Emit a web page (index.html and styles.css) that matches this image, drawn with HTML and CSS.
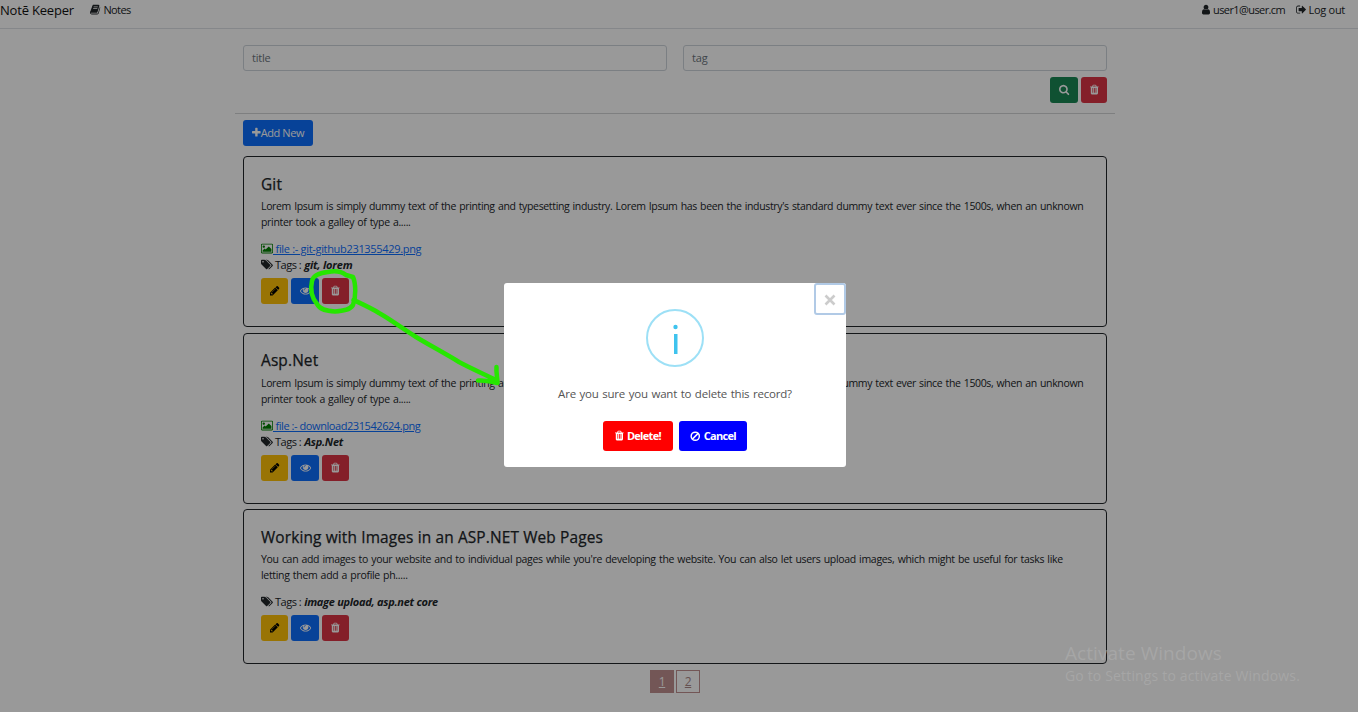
FILE: index.html
```
<!DOCTYPE html>
<html lang="en">
<head>
<meta charset="utf-8">
<title>Notē Keeper</title>
<link rel="stylesheet" href="styles.css">
</head>
<body>
<svg class="sprite" aria-hidden="true">
  <symbol id="trash" viewBox="192 0 1408 1792"><path d="M704 1376v-704q0-14-9-23t-23-9h-64q-14 0-23 9t-9 23v704q0 14 9 23t23 9h64q14 0 23-9t9-23zm256 0v-704q0-14-9-23t-23-9h-64q-14 0-23 9t-9 23v704q0 14 9 23t23 9h64q14 0 23-9t9-23zm256 0v-704q0-14-9-23t-23-9h-64q-14 0-23 9t-9 23v704q0 14 9 23t23 9h64q14 0 23-9t9-23zm-544-992h448l-48-117q-7-9-17-11h-317q-10 2-17 11zm928 32v64q0 14-9 23t-23 9h-96v948q0 83-47 143.5t-113 60.5h-832q-66 0-113-58.5t-47-141.5v-952h-96q-14 0-23-9t-9-23v-64q0-14 9-23t23-9h309l70-167q15-37 54-63t79-26h320q40 0 79 26t54 63l70 167h309q14 0 23 9t9 23z"/></symbol>
  <symbol id="pencil" viewBox="128 0 1536 1792"><path d="M491 1536l91-91-235-235-91 91v107h128v128h107zm523-928q0-22-22-22-10 0-17 7l-542 542q-7 7-7 17 0 22 22 22 10 0 17-7l542-542q7-7 7-17zm-54-192l416 416-832 832h-416v-416zm683 96q0 53-37 90l-166 166-416-416 166-165q36-38 90-38 53 0 91 38l235 234q37 39 37 91z"/></symbol>
  <symbol id="eye" viewBox="0 0 1792 1792"><path d="M1664 960q-152-236-381-353 61 104 61 225 0 185-131.5 316.5t-316.5 131.5-316.5-131.5-131.5-316.5q0-121 61-225-229 117-381 353 133 205 333.5 326.5t434.5 121.5 434.5-121.5 333.5-326.5zm-720-384q0-20-14-34t-34-14q-125 0-214.5 89.5t-89.5 214.5q0 20 14 34t34 14 34-14 14-34q0-86 61-147t147-61q20 0 34-14t14-34zm848 384q0 34-20 69-140 230-376.5 368.5t-499.5 138.5-499.5-139-376.5-368q-20-35-20-69t20-69q140-229 376.5-368t499.5-139 499.5 139 376.5 368q20 35 20 69z"/></symbol>
  <symbol id="search" viewBox="64 0 1664 1792"><path d="M1216 832q0-185-131.5-316.5t-316.5-131.5-316.5 131.5-131.5 316.5 131.5 316.5 316.5 131.5 316.5-131.5 131.5-316.5zm512 832q0 52-38 90t-90 38q-54 0-90-38l-343-342q-179 124-399 124-143 0-273.5-55.5t-225-150-150-225-55.5-273.5 55.5-273.5 150-225 225-150 273.5-55.5 273.5 55.5 225 150 150 225 55.5 273.5q0 220-124 399l343 343q37 37 37 90z"/></symbol>
  <symbol id="plus" viewBox="192 0 1408 1792"><path d="M1600 736v192q0 40-28 68t-68 28h-416v416q0 40-28 68t-68 28h-192q-40 0-68-28t-28-68v-416h-416q-40 0-68-28t-28-68v-192q0-40 28-68t68-28h416v-416q0-40 28-68t68-28h192q40 0 68 28t28 68v416h416q40 0 68 28t28 68z"/></symbol>
  <symbol id="user" viewBox="256 0 1280 1792"><path d="M1536 1399q0 109-62.5 187t-150.5 78h-854q-88 0-150.5-78t-62.5-187q0-85 8.5-160.5t31.5-152 58.5-131 94-89 134.5-34.5q131 128 313 128t313-128q76 0 134.5 34.5t94 89 58.5 131 31.5 152 8.5 160.5zm-256-887q0 159-112.5 271.5t-271.5 112.5-271.5-112.5-112.5-271.5 112.5-271.5 271.5-112.5 271.5 112.5 112.5 271.5z"/></symbol>
  <symbol id="signout" viewBox="64 0 1600 1792"><path d="M704 1440q0 4 1 20t.5 26.5-3 23.5-10 19.5-20.5 6.5h-320q-119 0-203.5-84.5t-84.5-203.5v-704q0-119 84.5-203.5t203.5-84.5h320q13 0 22.500 9.500t9.500 22.500q0 4 1 20t.5 26.500-3 23.500-10 19.500-20.500 6.500h-320q-66 0-113 47t-47 113v704q0 66 47 113t113 47h312l11.500 1 11.500 3 8 5.500 7 9 2 13.500zm928-544q0 26-19 45l-544 544q-19 19-45 19t-45-19-19-45v-288h-448q-26 0-45-19t-19-45v-384q0-26 19-45t45-19h448v-288q0-26 19-45t45-19 45 19l544 544q19 19 19 45z"/></symbol>
  <symbol id="book" viewBox="64 0 1664 1792"><path d="M1703 478q40 57 18 129l-275 906q-19 64-76.500 107.500t-122.500 43.500h-923q-77 0-148.500-53.500t-99.500-131.500q-24-67-2-127 0-4 3-27t4-37q1-8-3-21.500t-3-19.500q2-11 8-21t16.500-23.500 16.500-23.500q23-38 45-91.500t30-91.500q3-10 .5-30t-.5-28q3-11 17-28t17-23q21-36 42-92t25-90q1-9-2.500-32t.5-28q4-13 22-30.500t22-22.500q19-26 42.500-84.500t27.500-96.500q1-8-3-25.500t-2-26.500q2-8 9-18t18-23 17-21q8-12 16.500-30.500t15-35 16-36 19.500-32 26.500-23.500 36-11.500 47.500 5.500l-1 3q38-9 51-9h761q74 0 114 56t18 130l-274 906q-36 119-71.500 153.500t-128.500 34.500h-869q-27 0-38 15-11 16-1 43 24 70 144 70h923q29 0 56-15.500t35-41.500l300-987q7-22 5-57 38 15 59 43zm-1064 2q-4 13 2 22.500t20 9.500h608q13 0 25.500-9.500t16.500-22.500l21-64q4-13-2-22.500t-20-9.500h-608q-13 0-25.500 9.500t-16.500 22.500zm-83 256q-4 13 2 22.500t20 9.500h608q13 0 25.500-9.500t16.500-22.500l21-64q4-13-2-22.500t-20-9.500h-608q-13 0-25.500 9.500t-16.500 22.500z"/></symbol>
  <symbol id="tags" viewBox="0 0 1920 1792"><path d="M448 448q0-53-37.500-90.500t-90.500-37.500-90.500 37.500-37.500 90.500 37.500 90.500 90.500 37.500 90.500-37.500 37.500-90.500zm1067 576q0 53-37 90l-491 492q-39 37-91 37-53 0-90-37l-715-716q-38-37-64.500-101t-26.500-117v-416q0-52 38-90t90-38h416q53 0 117 26.500t102 64.500l715 714q37 39 37 91zm384 0q0 53-37 90l-491 492q-39 37-91 37-36 0-59-14t-53-45l470-470q37-37 37-90 0-52-37-91l-715-714q-38-38-102-64.500t-117-26.500h224q53 0 117 26.500t102 64.500l715 714q37 39 37 91z"/></symbol>
  <symbol id="picture" viewBox="-64 0 1920 1792"><path d="M576 576q0 80-56 136t-136 56-136-56-56-136 56-136 136-56 136 56 56 136zm1024 384v448h-1408v-192l320-320 160 160 512-512zm96-704h-1600q-13 0-22.500 9.500t-9.500 22.500v1216q0 13 9.500 22.500t22.500 9.500h1600q13 0 22.500-9.500t9.500-22.500v-1216q0-13-9.500-22.500t-22.500-9.500zm160 32v1216q0 66-47 113t-113 47h-1600q-66 0-113-47t-47-113v-1216q0-66 47-113t113-47h1600q66 0 113 47t47 113z"/></symbol>
  <symbol id="ban" viewBox="0 0 20 20"><g fill="none" stroke="currentColor" stroke-width="2.8"><circle cx="10" cy="10" r="7.8"/><path d="M4.500 15.500l11-11"/></g></symbol>
</svg>

<header class="navbar">
  <span class="brand">Notē Keeper</span>
  <span class="nav-item notes"><svg class="icon w-book"><use href="#book"/></svg>Notes</span>
  <span class="nav-item account"><svg class="icon w-user"><use href="#user"/></svg>user1@user.cm</span>
  <span class="nav-item logout"><svg class="icon w-book"><use href="#signout"/></svg>Log out</span>
</header>

<main class="container">
  <form class="filters">
    <div class="field title-field">title</div>
    <div class="field">tag</div>
  </form>
  <div class="filter-actions">
    <span class="btn green"><svg class="icon w-search"><use href="#search"/></svg></span>
    <span class="btn red narrow"><svg class="icon w-trash"><use href="#trash"/></svg></span>
  </div>
  <div class="toolbar"><span class="btn blue add"><svg class="icon w-plus"><use href="#plus"/></svg>Add New</span></div>

  <article class="card">
    <h2>Git</h2>
    <p><span class="lorem">Lorem Ipsum is simply dummy text of the printing and typesetting industry. Lorem Ipsum has been the industry's standard dummy text ever since the 1500s, when an unknown</span><br>printer took a galley of type a.....</p>
    <div class="file"><svg class="icon w-wide"><use href="#picture"/></svg><a class="git-file">&nbsp;file :- git-github231355429.png</a></div>
    <div class="tags"><svg class="icon w-wide"><use href="#tags"/></svg><span>Tags :</span><b class="git-tags">git, lorem</b></div>
    <div class="actions">
      <span class="btn yellow"><svg class="icon w-pencil"><use href="#pencil"/></svg></span>
      <span class="btn blue view"><svg class="icon w-eye"><use href="#eye"/></svg></span>
      <span class="btn red"><svg class="icon w-trash"><use href="#trash"/></svg></span>
    </div>
  </article>

  <article class="card second">
    <h2>Asp.Net</h2>
    <p><span class="lorem">Lorem Ipsum is simply dummy text of the printing and typesetting industry. Lorem Ipsum has been the industry's standard dummy text ever since the 1500s, when an unknown</span><br>printer took a galley of type a.....</p>
    <div class="file"><svg class="icon w-wide"><use href="#picture"/></svg><a>&nbsp;file :- download231542624.png</a></div>
    <div class="tags"><svg class="icon w-wide"><use href="#tags"/></svg><span>Tags :</span><b>Asp.Net</b></div>
    <div class="actions">
      <span class="btn yellow"><svg class="icon w-pencil"><use href="#pencil"/></svg></span>
      <span class="btn blue view"><svg class="icon w-eye"><use href="#eye"/></svg></span>
      <span class="btn red"><svg class="icon w-trash"><use href="#trash"/></svg></span>
    </div>
  </article>

  <article class="card third">
    <h2>Working with Images in an ASP.NET Web Pages</h2>
    <p>You can add images to your website and to individual pages while you're developing the website. You can also let users upload images, which might be useful for tasks like<br>letting them add a profile ph.....</p>
    <div class="tags"><svg class="icon w-wide"><use href="#tags"/></svg><span>Tags :</span><b>image upload, asp.net core</b></div>
    <div class="actions">
      <span class="btn yellow"><svg class="icon w-pencil"><use href="#pencil"/></svg></span>
      <span class="btn blue view"><svg class="icon w-eye"><use href="#eye"/></svg></span>
      <span class="btn red"><svg class="icon w-trash"><use href="#trash"/></svg></span>
    </div>
  </article>

  <nav class="pager"><a class="page current">1</a><a class="page">2</a></nav>
</main>

<div class="backdrop">
  <section class="modal">
    <span class="close"><svg viewBox="0 0 12 12"><path d="M1.500 1.500l9 9M10.500 1.500l-9 9"/></svg></span>
    <svg class="info" viewBox="0 0 58 58"><circle class="ring" cx="29" cy="29" r="28"/><circle class="dot" cx="29.500" cy="18" r="2.200"/><rect class="dot" x="28" y="25" width="3.500" height="20"/></svg>
    <p class="question">Are you sure you want to delete this record?</p>
    <div class="choices">
      <span class="choice delete"><svg class="icon w-trash"><use href="#trash"/></svg>Delete!</span>
      <span class="choice cancel"><svg class="icon w-ban"><use href="#ban"/></svg>Cancel</span>
    </div>
  </section>
</div>

<svg class="scribble" viewBox="0 0 1358 712">
  <path d="M312 281C313 276 318 273 328 272C337 270 342 272 346 275L353 277C356 284 356 297 353 305C350 310 343 311 335 311.500C327 311 320 310 317 304C312 298 310 290 312 281"/>
  <path d="M353.500 300C362 304 371 308 379 313C393 321 403 329 416 337C431 346 446 354 459 362C472 369 484 374 496 380M496.500 367C496 373 497.500 378 497.500 383C491 381 485 380 478 380.500"/>
</svg>

<aside class="watermark"><div class="wm-title">Activate Windows</div><div class="wm-text">Go to Settings to activate Windows.</div></aside>
</body>
</html>
```
FILE: styles.css
```
* { box-sizing: border-box; }
body {
  margin: 0;
  height: 712px;
  overflow: hidden;
  background: #fff;
  color: #212529;
  font: 11px/16px "Open Sans", "Noto Sans", sans-serif;
  letter-spacing: -0.4px;
}
.sprite { position: absolute; width: 0; height: 0; }
.icon { height: 11.200px; flex: none; fill: currentColor; overflow: visible; }
.w-trash, .w-plus { width: 8.800px; }
.w-pencil { width: 9.600px; }
.w-eye { width: 11.200px; }
.w-search, .w-book { width: 10.400px; }
.w-user { width: 8px; }
.w-wide { width: 12px; }
.w-ban { width: 10.500px; height: 10.500px; }

.navbar { display: flex; height: 29px; padding: 2px 13px 0 0; border-bottom: 1px solid #dee2e6; white-space: nowrap; }
.nav-item { display: flex; align-items: center; height: 16px; }
.brand { width: 90px; height: 16px; font-size: 13px; letter-spacing: -0.190px; color: #111; }
.notes { letter-spacing: -0.600px; }
.notes .icon { margin-right: 3px; }
.account { margin-left: auto; letter-spacing: -0.600px; }
.account .icon { margin-right: 3px; }
.logout { margin-left: 11px; letter-spacing: -0.280px; }
.logout .icon { margin-right: 2px; }

.container { width: 880px; margin: 0 auto 0 235px; }
.filters { display: grid; grid-template-columns: 424px 424px; gap: 16px; padding: 16px 8px 0; }
.field { height: 26px; padding: 4px 8px; border: 1px solid #ced4da; border-radius: 3px; color: #6c757d; letter-spacing: -0.200px; }
.filter-actions { display: flex; justify-content: flex-end; gap: 3px; height: 43px; padding: 6px 8px 0; border-bottom: 1px solid #d3d4d6; }
.toolbar { padding: 6px 8px 10px; }

.btn { display: flex; align-items: center; justify-content: center; width: 27px; height: 26px; border-radius: 3px; color: #fff; }
.narrow { width: 26px; }
.green { width: 28px; background: #198754; }
.red { background: #dc3545; }
.blue { width: 28px; background: #0d6efd; }
.yellow { background: #ffc107; color: #000; }
.add { width: 70px; }
.view { padding-left: 1px; }

.card { width: 864px; height: 171px; margin: 0 8px; padding: 17px; border: 1px solid #212529; border-radius: 4px; white-space: nowrap; }
.second { margin-top: 6px; }
.third { height: 155px; margin-top: 5px; }
.card h2 { height: 24px; margin: 0; font-size: 15.400px; font-weight: 500; line-height: 22px; letter-spacing: 0.150px; -webkit-text-stroke: 0.250px currentColor; }
.card.second h2 { line-height: 20px; }
.card p { margin: 0 0 11px; font-size: 10.500px; word-spacing: 0.800px; letter-spacing: -0.330px; }
.card .lorem { letter-spacing: -0.350px; }
.third p { letter-spacing: -0.312px; }
.file, .tags { display: flex; align-items: center; height: 16px; }
.file .icon { color: #008000; }
.file a { color: #0d6efd; text-decoration: underline; letter-spacing: -0.430px; }
.file .git-file { letter-spacing: -0.320px; }
.tags .icon { margin-right: 2px; }
.tags b { margin-left: 3px; font-style: italic; letter-spacing: -0.270px; }
.tags .git-tags { letter-spacing: -0.180px; }
.tags span { letter-spacing: -0.500px; }
.actions { display: flex; gap: 3px; margin-top: 5px; }

.pager { display: flex; gap: 2px; padding: 6px 0 0 415px; }
.page { width: 24px; height: 23px; border: 1px solid #c09090; color: #a88; font-size: 12px; line-height: 22px; text-align: center; text-decoration: underline; }
.current { background: #c09090; color: #fff; }

.backdrop { position: absolute; inset: 0; background: rgba(0, 0, 0, 0.4); }
.modal { position: absolute; left: 504px; top: 283px; width: 342px; height: 184px; padding-top: 26px; border-radius: 3px; background: #fff; display: flex; flex-direction: column; align-items: center; }
.close { position: absolute; top: 0; right: 0; width: 32px; height: 32px; padding: 2px 0 0; border: 2px solid #b1cae6; border-radius: 3px; background: #fff; display: flex; align-items: center; justify-content: center; }
.close svg { width: 12px; height: 12px; flex: none; fill: none; stroke: #ccc; stroke-width: 2.600; }
.info { width: 58px; height: 58px; }
.ring { fill: none; stroke: #9de0f6; stroke-width: 2; }
.dot { fill: #3fc3ee; }
.question { margin: 18px 0 0; color: #545454; font-size: 11.500px; line-height: 18px; word-spacing: 0.800px; letter-spacing: -0.200px; white-space: nowrap; }
.choices { display: flex; gap: 6px; margin-top: 18px; }
.choice { display: flex; align-items: center; justify-content: center; height: 30px; border-radius: 3px; color: #fff; font-weight: 700; letter-spacing: -0.700px; }
.choice .icon { margin-right: 3px; }
.delete { width: 70px; background: #f00; }
.cancel { width: 68px; background: #00f; }

.scribble { position: absolute; left: 0; top: 0; width: 1358px; height: 712px; fill: none; stroke: #26e600; stroke-width: 4.500; stroke-linecap: round; stroke-linejoin: round; }
.watermark { position: absolute; left: 1065px; top: 640px; color: rgba(180, 180, 180, 0.5); white-space: nowrap; }
.wm-title { font-size: 19px; line-height: 26px; letter-spacing: 0.060px; }
.wm-text { font-size: 14px; line-height: 20px; letter-spacing: 0.160px; }
```
